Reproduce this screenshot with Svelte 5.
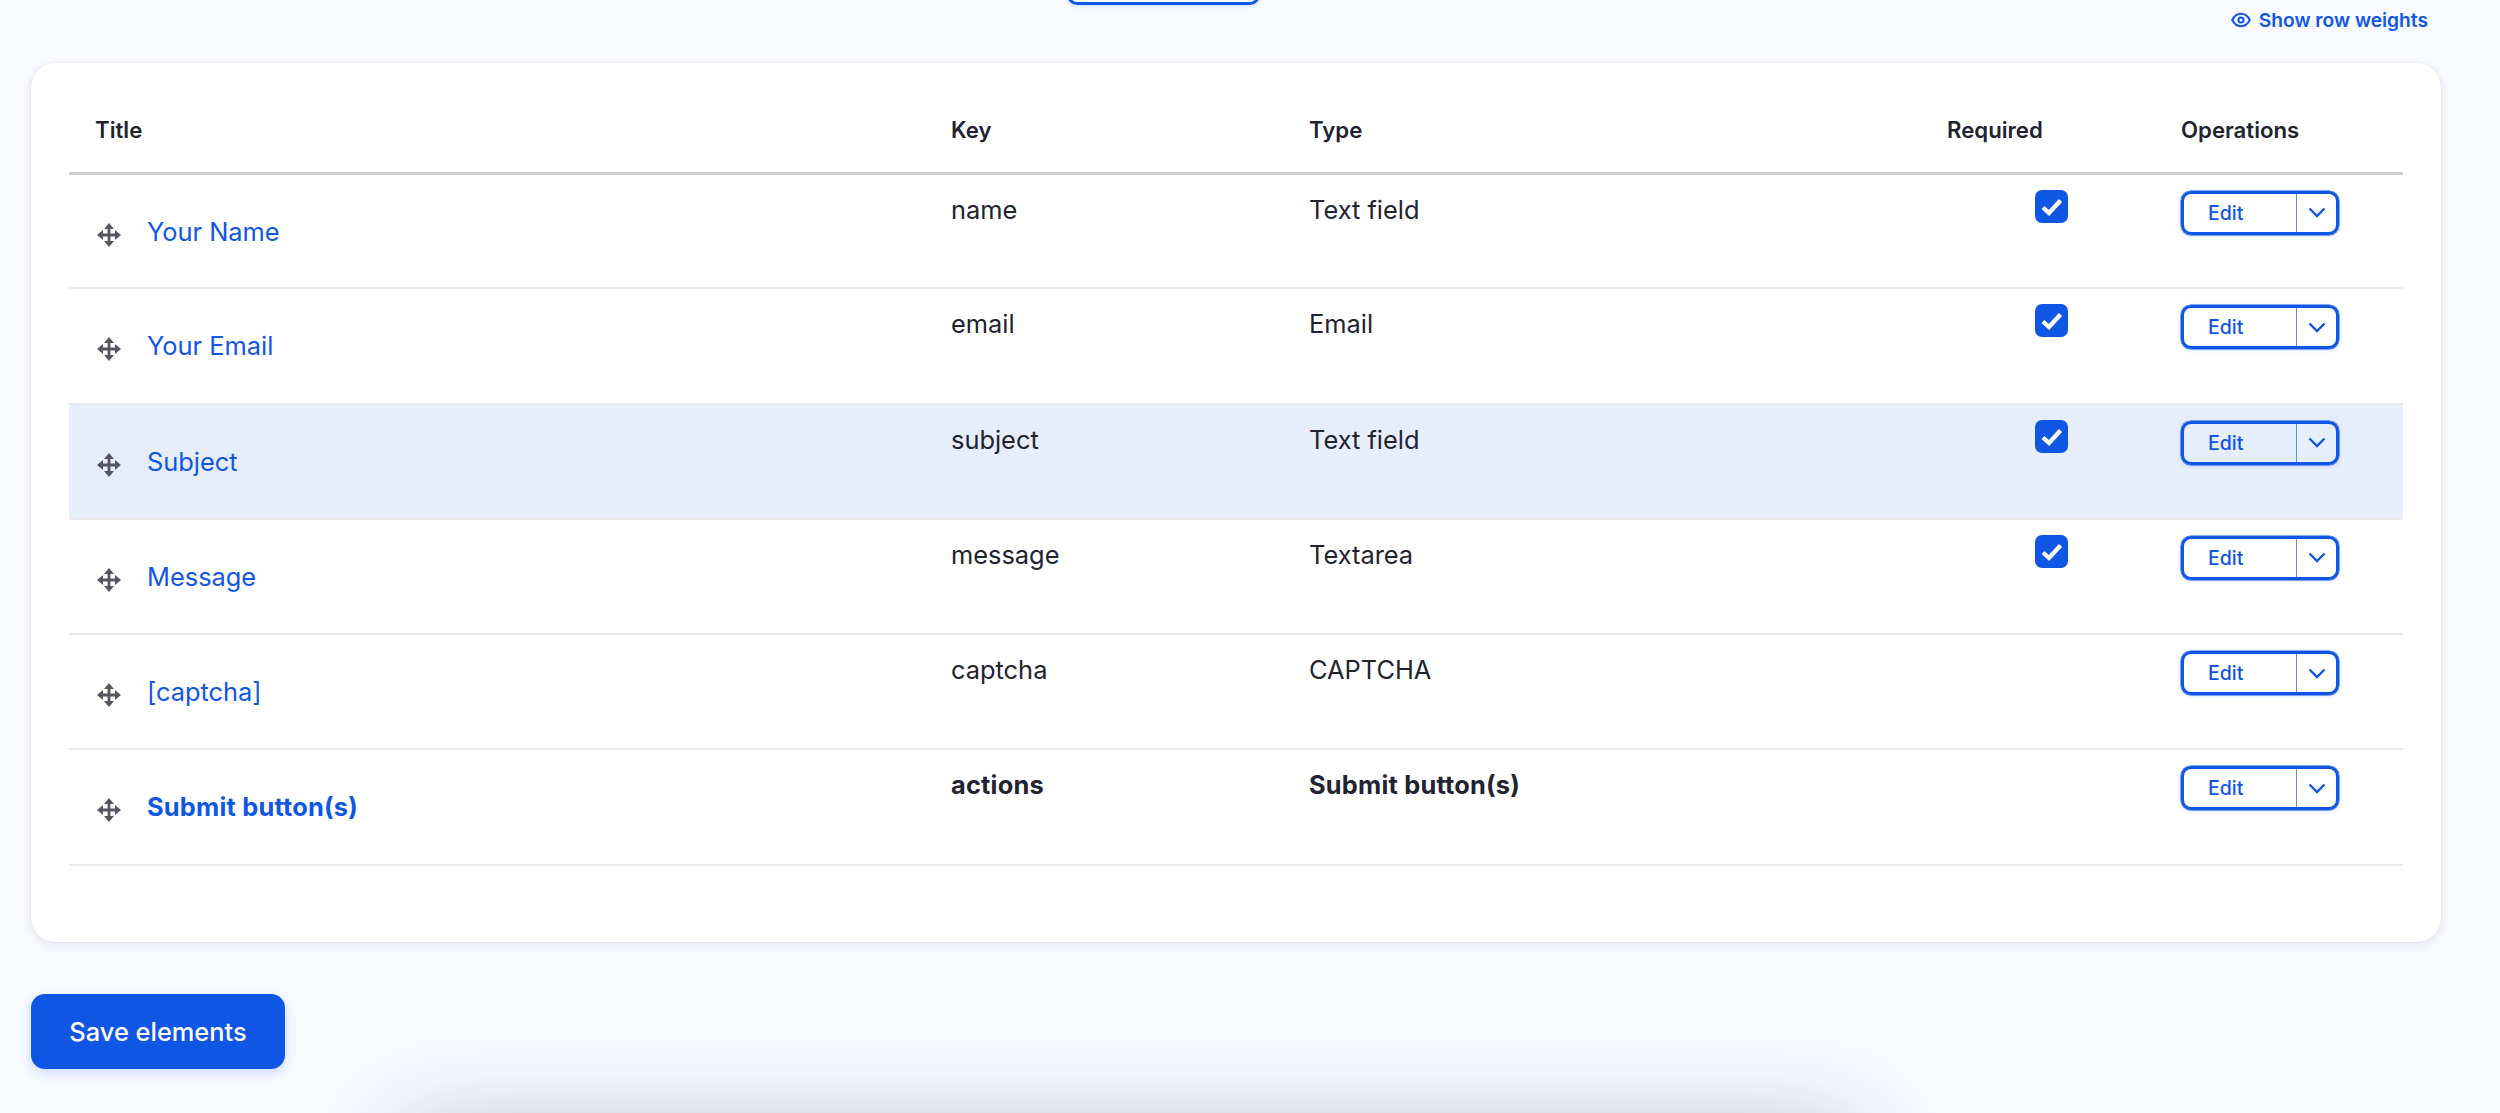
<script>
	const rows = [
		{ title: 'Your Name', key: 'name', type: 'Text field', required: true },
		{ title: 'Your Email', key: 'email', type: 'Email', required: true },
		{ title: 'Subject', key: 'subject', type: 'Text field', required: true, selected: true },
		{ title: 'Message', key: 'message', type: 'Textarea', required: true },
		{ title: '[captcha]', key: 'captcha', type: 'CAPTCHA', required: false },
		{ title: 'Submit button(s)', key: 'actions', type: 'Submit button(s)', required: false, strong: true }
	];
</script>

<div class="page">
	<div class="toolbar">
		<span class="cut-button"></span>
		<button class="weights" type="button">
			<svg viewBox="0 0 20 16" width="20" height="16" aria-hidden="true">
				<path d="M1.2 8C3.2 4 6.3 1.8 10 1.8S16.8 4 18.8 8c-2 4-5.1 6.2-8.8 6.2S3.200 12 1.200 8Z" fill="none" stroke="currentColor" stroke-width="2" />
				<circle cx="10" cy="8" r="2.600" fill="none" stroke="currentColor" stroke-width="2" />
			</svg>
			Show row weights
		</button>
	</div>

	<section class="card">
		<table>
			<colgroup>
				<col style="width:856px" />
				<col style="width:358px" />
				<col style="width:638px" />
				<col style="width:234px" />
				<col style="width:248px" />
			</colgroup>
			<thead>
				<tr>
					<th>Title</th>
					<th>Key</th>
					<th>Type</th>
					<th>Required</th>
					<th>Operations</th>
				</tr>
			</thead>
			<tbody>
				{#each rows as row}
					<tr class:selected={row.selected} class:strong={row.strong}>
						<td class="title-cell">
							<div class="title-wrap">
								<svg class="handle" viewBox="0 0 24 24" width="24" height="24" aria-hidden="true">
									<path d="M12 3v18M3 12h18" stroke="#55565f" stroke-width="2.800" fill="none" />
									<path d="M12 0 17 6H7ZM12 24 7 18H17ZM0 12 6 7V17ZM24 12 18 17V7Z" fill="#55565f" />
								</svg>
								<a href="#top">{row.title}</a>
							</div>
						</td>
						<td>{row.key}</td>
						<td>{row.type}</td>
						<td class="required-cell">
							{#if row.required}
								<span class="check">
									<svg viewBox="0 0 33 33" width="33" height="33" aria-hidden="true">
										<path d="M8 17.500 14 23 25.500 10.500" fill="none" stroke="#fff" stroke-width="4.400" />
									</svg>
								</span>
							{/if}
						</td>
						<td class="ops-cell">
							<div class="dropbutton">
								<span class="edit">Edit</span>
								<span class="toggle">
									<svg viewBox="0 0 18 11" width="18" height="11" aria-hidden="true">
										<path d="M1.500 1.500 9 9l7.500-7.500" fill="none" stroke="currentColor" stroke-width="2.400" />
									</svg>
								</span>
							</div>
						</td>
					</tr>
				{/each}
			</tbody>
		</table>
	</section>

	<button class="save" type="button">Save elements</button>
	<div class="bar-shadow"></div>
</div>

<style>
	:global(body) {
		margin: 0;
		background: #f9faff;
	}
	.page {
		position: relative;
		height: 1113px;
		overflow: hidden;
		padding: 0 59px 0 31px;
		box-sizing: border-box;
		background: #f9faff;
		color: #222330;
		font-family: Inter, "Liberation Sans", sans-serif;
		font-size: 25.400px;
	}
	.toolbar {
		height: 63px;
		display: flex;
		justify-content: space-between;
		align-items: flex-start;
		padding: 0 13px 0 1036px;
		box-sizing: border-box;
	}
	.cut-button {
		display: block;
		width: 193px;
		height: 48px;
		margin-top: -43px;
		box-sizing: border-box;
		border: 3px solid #1056e5;
		border-radius: 10px;
		box-shadow: 0 1px 4px rgba(16, 86, 229, 0.2);
	}
	.weights {
		display: flex;
		align-items: center;
		gap: 8px;
		margin-top: 8px;
		padding: 0;
		border: 0;
		background: none;
		color: #1056e5;
		font: 600 19.200px/24px Inter, "Liberation Sans", sans-serif;
	}
	.card {
		height: 879px;
		box-sizing: border-box;
		padding: 0 38px;
		background: #fff;
		border-radius: 24px;
		box-shadow: 0 0 0 1px rgba(220, 222, 235, 0.35), 0 3px 10px rgba(34, 35, 48, 0.1);
	}
	table {
		width: 2334px;
		table-layout: fixed;
		border-collapse: collapse;
	}
	th {
		height: 110px;
		padding: 52px 26px 0;
		box-sizing: border-box;
		border-bottom: 3px solid #cdcdcf;
		vertical-align: top;
		text-align: left;
		font-size: 22.200px;
		font-weight: 600;
		line-height: 30px;
	}
	td {
		height: 115.300px;
		padding: 20px 26px 0;
		box-sizing: border-box;
		border-bottom: 2px solid #e9e9ec;
		vertical-align: top;
		line-height: 30px;
	}
	tr.selected td {
		background: #e6edfb;
	}
	tr.strong td {
		font-weight: 700;
		letter-spacing: 0.2px;
	}
	.title-wrap {
		display: flex;
		align-items: flex-start;
		gap: 26px;
		padding-top: 22px;
		margin-left: 2px;
	}
	.handle {
		flex: none;
		margin-top: 6px;
	}
	a {
		color: #1056e5;
		text-decoration: none;
	}
	.required-cell {
		padding: 15px 0 0 114px;
	}
	.check {
		display: block;
		width: 33px;
		height: 33px;
		border-radius: 7px;
		background: #1056e5;
	}
	.check svg {
		display: block;
	}
	.ops-cell {
		padding: 16px 26px 0;
	}
	.dropbutton {
		display: flex;
		width: 158px;
		height: 44px;
		box-sizing: border-box;
		border: 3px solid #1056e5;
		border-radius: 10px;
		color: #1056e5;
		box-shadow: 0 0 0 0.500px #1056e5, 0 1px 4px rgba(16, 86, 229, 0.2);
		font-size: 19.500px;
		font-weight: 500;
		line-height: 38px;
		letter-spacing: 0;
	}
	.edit {
		width: 113px;
		padding-left: 24px;
		box-sizing: border-box;
		border-right: 1px solid #5a8bed;
	}
	.toggle {
		flex: 1;
		display: flex;
		align-items: center;
		justify-content: center;
	}
	.save {
		display: block;
		width: 254px;
		height: 75px;
		margin-top: 52px;
		border: 0;
		border-radius: 14px;
		background: #1056e5;
		color: #fff;
		font: 500 25.400px Inter, "Liberation Sans", sans-serif;
		box-shadow: 0 4px 12px rgba(16, 86, 229, 0.2);
	}
	.bar-shadow {
		position: absolute;
		left: 420px;
		top: 1150px;
		width: 1420px;
		height: 60px;
		border-radius: 20px;
		box-shadow: 0 0 90px 20px rgba(34, 35, 48, 0.3);
	}
</style>
